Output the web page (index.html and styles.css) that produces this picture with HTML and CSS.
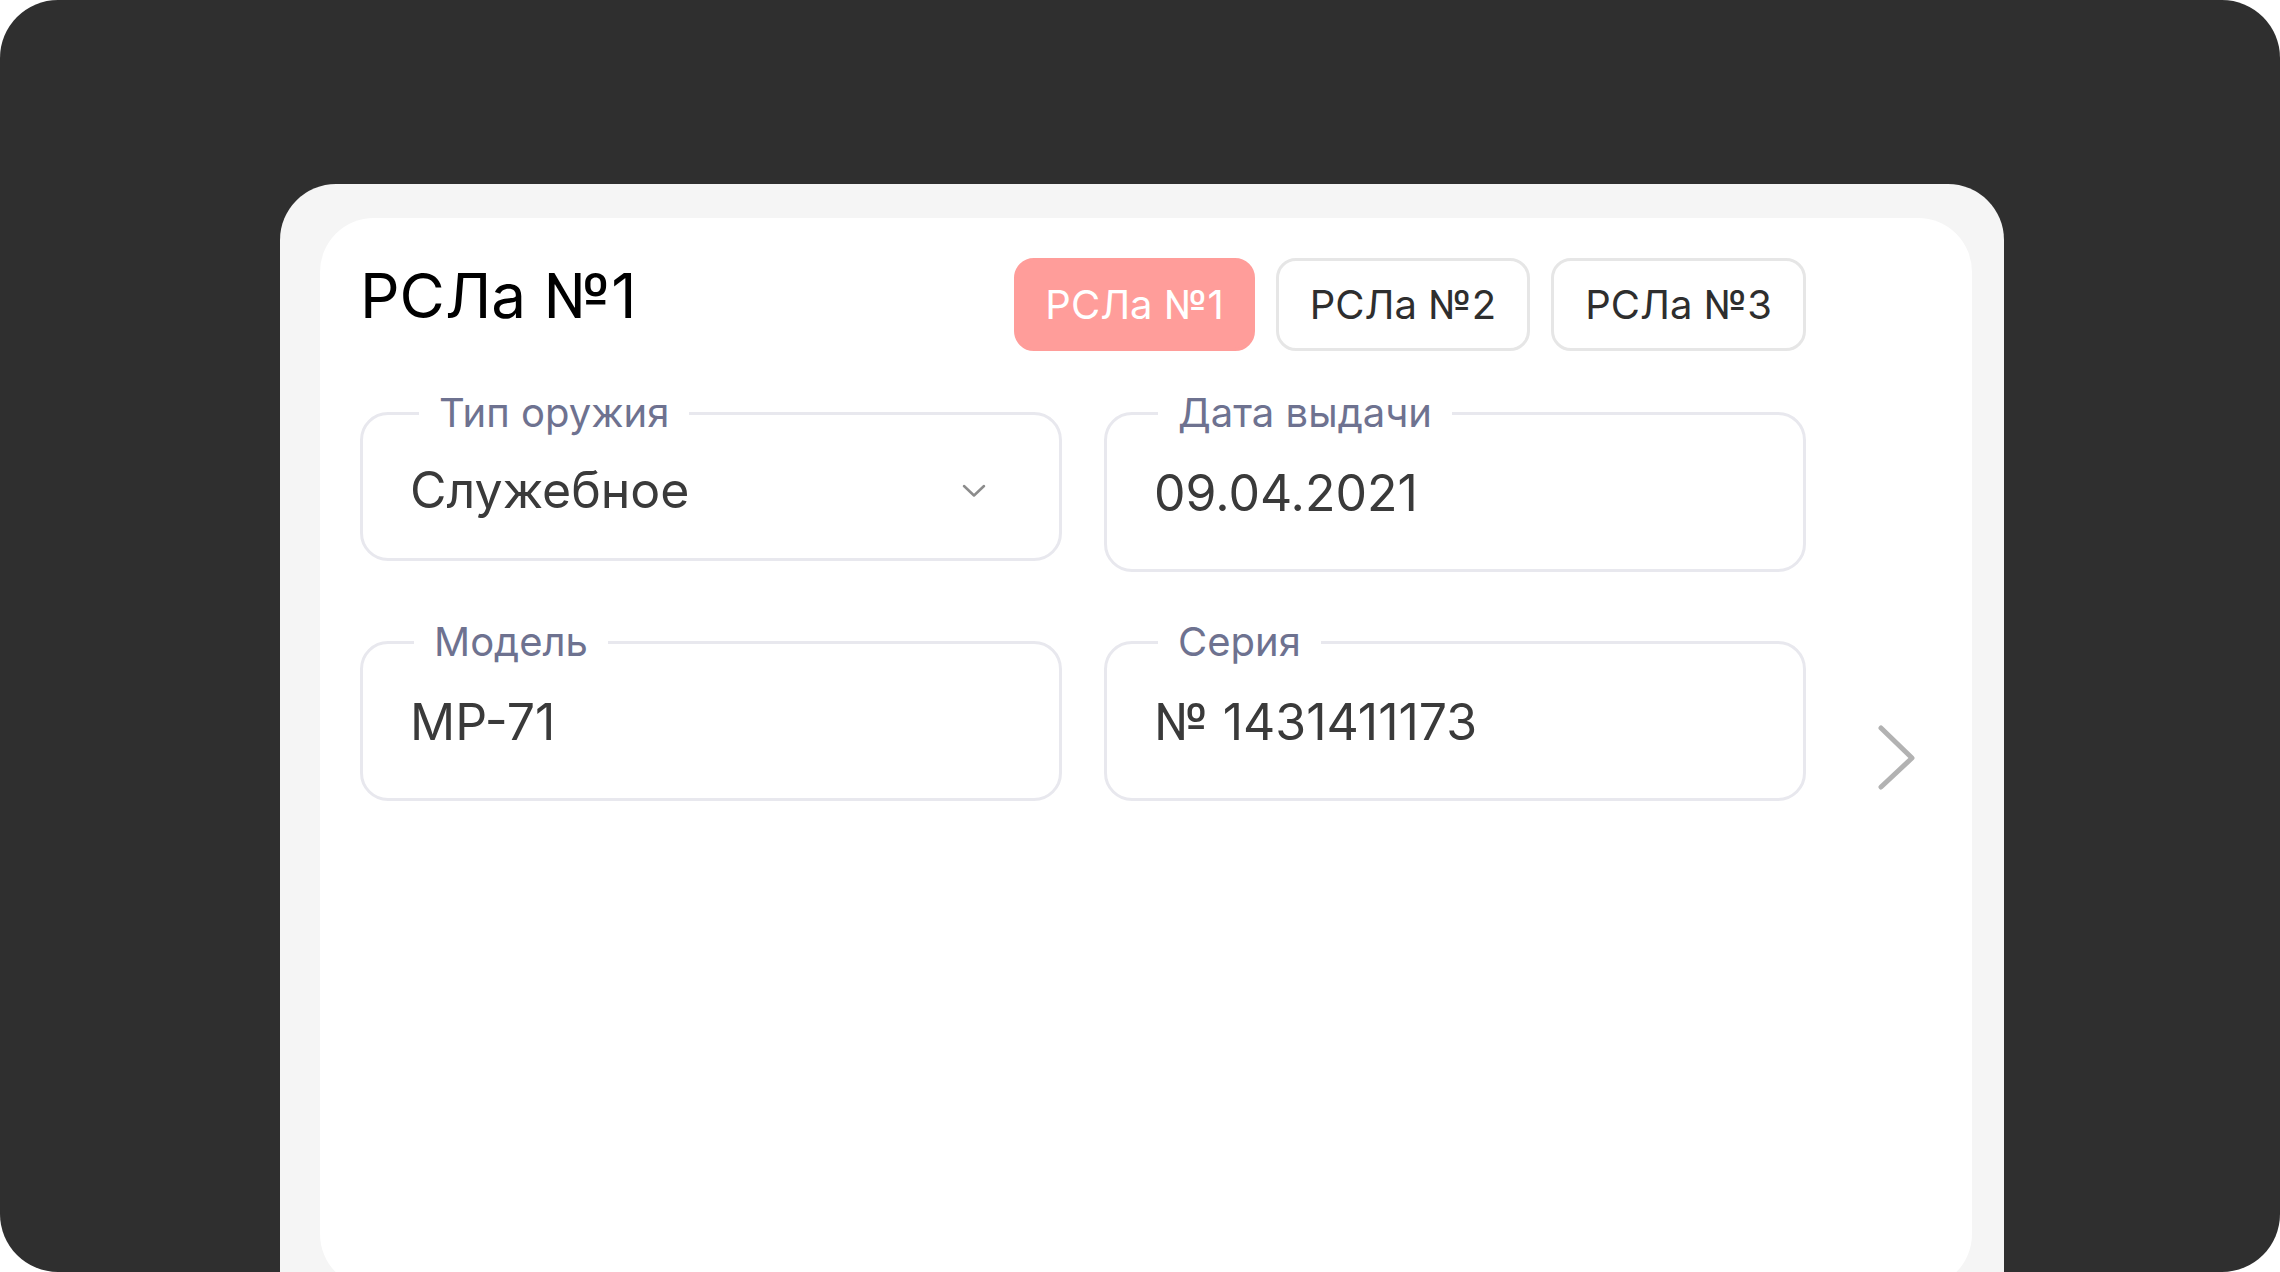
FILE: index.html
```html
<!DOCTYPE html>
<html lang="ru">
<head>
    <meta charset="UTF-8">
    <meta name="viewport" content="width=device-width, initial-scale=1.0">
    <title>РСЛа</title>
    <link rel="stylesheet" href="styles.css">
</head>
<body>
    <div class="screen">
        <div class="device">
            <div class="panel">
                <div class="panel-head">
                    <h1 class="title">РСЛа №1</h1>
                    <div class="tabs">
                        <button class="tab active">РСЛа №1</button>
                        <button class="tab">РСЛа №2</button>
                        <button class="tab">РСЛа №3</button>
                    </div>
                </div>

                <div class="fields">
                    <fieldset class="field field-select">
                        <legend>Тип оружия</legend>
                        <div class="field-value">
                            <span>Служебное</span>
                            <svg class="select-arrow" width="26" height="16" viewBox="0 0 26 16">
                                <path d="M3 3 L13 12.5 L23 3" fill="none" stroke="#8c8c8c" stroke-width="2.5" stroke-linecap="round" stroke-linejoin="round"/>
                            </svg>
                        </div>
                    </fieldset>
                    <fieldset class="field">
                        <legend>Дата выдачи</legend>
                        <div class="field-value">09.04.2021</div>
                    </fieldset>
                    <div></div>

                    <fieldset class="field">
                        <legend>Модель</legend>
                        <div class="field-value">МР-71</div>
                    </fieldset>
                    <fieldset class="field">
                        <legend>Серия</legend>
                        <div class="field-value">№ 1431411173</div>
                    </fieldset>
                    <button class="next-btn">
                        <svg width="40" height="70" viewBox="0 0 40 70">
                            <path d="M5 5 L36 35 L5 64" fill="none" stroke="#b2b2b2" stroke-width="5" stroke-linecap="round" stroke-linejoin="round"/>
                        </svg>
                    </button>
                </div>
            </div>
        </div>
    </div>
</body>
</html>
```

FILE: styles.css
```css
html, body {
    margin: 0;
    height: 100%;
    background: #fff;
    overflow: hidden;
    font-family: Inter, "Noto Sans", sans-serif;
}
.screen {
    box-sizing: border-box;
    height: 1272px;
    padding: 184px 276px 0 280px;
    background: #2f2f2f;
    border-radius: 58px;
    overflow: hidden;
}
/* светлая рамка устройства */
.device {
    height: 1200px;
    padding: 34px 32px 0 40px;
    background: #f5f5f5;
    border-radius: 56px 56px 0 0;
}
.panel {
    box-sizing: border-box;
    height: 1070px;
    padding: 40px 0 0 40px;
    background: #fff;
    border-radius: 54px;
}
.panel-head {
    display: flex;
    justify-content: space-between;
    align-items: flex-start;
    width: 1446px;
}
.title {
    margin: 0;
    font-size: 62px;
    line-height: 76px;
    font-weight: 400;
    color: #000;
}
.tabs {
    display: flex;
    gap: 21px;
}
.tab {
    box-sizing: border-box;
    height: 93px;
    padding: 0 31px;
    border: 3px solid #e6e6e6;
    border-radius: 20px;
    background: #fff;
    font-family: inherit;
    font-size: 40px;
    color: #2e2e2e;
    cursor: pointer;
}
.tab.active {
    padding: 0 28px;
    background: #ff9d9a;
    border-color: #ff9d9a;
    color: #fff;
}
.fields {
    display: grid;
    grid-template-columns: 702px 702px auto;
    column-gap: 42px;
    row-gap: 46px;
    align-items: start;
    margin-top: 38px;
}
.field {
    min-width: 0;
    margin: 0;
    padding: 0 0 0 47px;
    border: 3px solid #e8e8ee;
    border-radius: 28px;
}
.field legend {
    margin-left: 4px;
    padding: 0 20px;
    font-size: 40px;
    line-height: 48px;
    color: #6e7290;
}
.field-select legend {
    margin-left: 9px;
}
.field-value {
    padding: 26px 0 46px;
    font-size: 50px;
    line-height: 60px;
    color: #3a3a3a;
}
/* у выпадающего списка поле ниже остальных */
.field-select .field-value {
    display: flex;
    justify-content: space-between;
    align-items: center;
    padding: 23px 72px 38px 0;
}
.select-arrow {
    margin-top: 2px;
}
.next-btn {
    align-self: end;
    justify-self: start;
    margin: 0 0 8px 28px;
    padding: 0;
    border: 0;
    background: none;
    line-height: 0;
    cursor: pointer;
}
```
